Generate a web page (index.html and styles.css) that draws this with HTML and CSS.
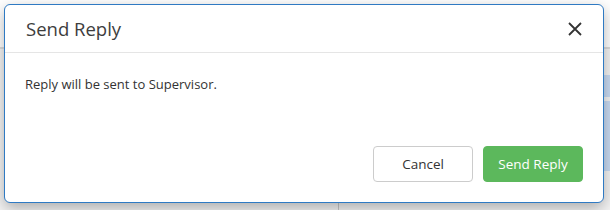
FILE: index.html
```html
<!DOCTYPE html>
<html>
<head>
<meta charset="utf-8">
<link rel="stylesheet" href="styles.css">
</head>
<body>
<div class="page">
  <div class="page-header"></div>
  <div class="page-main">
    <div class="col-left"></div>
    <div class="col-right">
      <div class="side-block"></div>
      <div class="side-block tall"></div>
    </div>
  </div>
</div>
<div class="modal">
  <div class="modal-header">
    <h4 class="modal-title">Send Reply</h4>
    <button class="close" aria-label="Close">
      <svg width="14" height="14" viewBox="0 0 14 14"><path d="M1 1 L13 13 M13 1 L1 13" stroke="#333" stroke-width="1.8" fill="none"/></svg>
    </button>
  </div>
  <div class="modal-body">Reply will be sent to Supervisor.</div>
  <div class="modal-footer">
    <button class="btn btn-default">Cancel</button>
    <button class="btn btn-success">Send Reply</button>
  </div>
</div>
</body>
</html>
```
FILE: styles.css
```css
html, body {
  margin: 0;
  padding: 0;
  background: #ffffff;
  font-family: "Open Sans", "Noto Sans", sans-serif;
  width: 610px;
  height: 210px;
  overflow: hidden;
}
.page {
  width: 610px;
  height: 210px;
  display: flex;
  flex-direction: column;
  background: #f4f4f4;
}
.page-header {
  height: 47px;
  border-bottom: 2px solid #dcdcdc;
  background: #ffffff;
}
.page-main {
  flex: 1;
  display: flex;
}
.col-left {
  width: 338px;
  border-right: 1px solid #c8c8c8;
}
.col-right {
  flex: 1;
  display: flex;
  flex-direction: column;
  align-items: flex-end;
  padding-top: 26px;
  gap: 4px;
}
.side-block {
  width: 8px;
  height: 22px;
  background: #c9dbf3;
}
.side-block.tall {
  height: 70px;
}
.modal {
  position: absolute;
  left: 4px;
  top: 4px;
  width: 598px;
  height: 197px;
  background: #ffffff;
  border: 1px solid #2f7ac3;
  border-radius: 6px;
  box-shadow: 0 5px 15px rgba(0, 0, 0, 0.3);
  display: flex;
  flex-direction: column;
  color: #333;
}
.modal-header {
  border-bottom: 1px solid #e5e5e5;
  display: flex;
  align-items: center;
  justify-content: space-between;
  padding: 0 20px 0 21px;
  box-sizing: border-box;
  flex: none;
  height: 48px;
}
.modal-title {
  margin: 0;
  font-size: 18.5px;
  font-weight: 400;
  color: #3d3d3d;
  line-height: 1;
  padding-top: 2px;
}
.close {
  border: 0;
  background: transparent;
  padding: 0;
  width: 14px;
  height: 14px;
  display: flex;
  margin-right: 1px;
  cursor: pointer;
}
.modal-body {
  padding: 22px 20px 0 20px;
  font-size: 13px;
  line-height: 18px;
  color: #333;
  flex: 1;
}
.modal-footer {
  display: flex;
  justify-content: flex-end;
  gap: 10px;
  padding: 0 20px 20px 20px;
}
.btn {
  width: 100px;
  height: 36px;
  font-family: "Open Sans", "Noto Sans", sans-serif;
  font-size: 13.5px;
  border-radius: 4px;
  border: 1px solid #cccccc;
  background: #ffffff;
  color: #333;
  padding: 0;
  box-sizing: border-box;
}
.btn-success {
  background: #5cb85c;
  border-color: #5cb85c;
  color: #ffffff;
}
```
